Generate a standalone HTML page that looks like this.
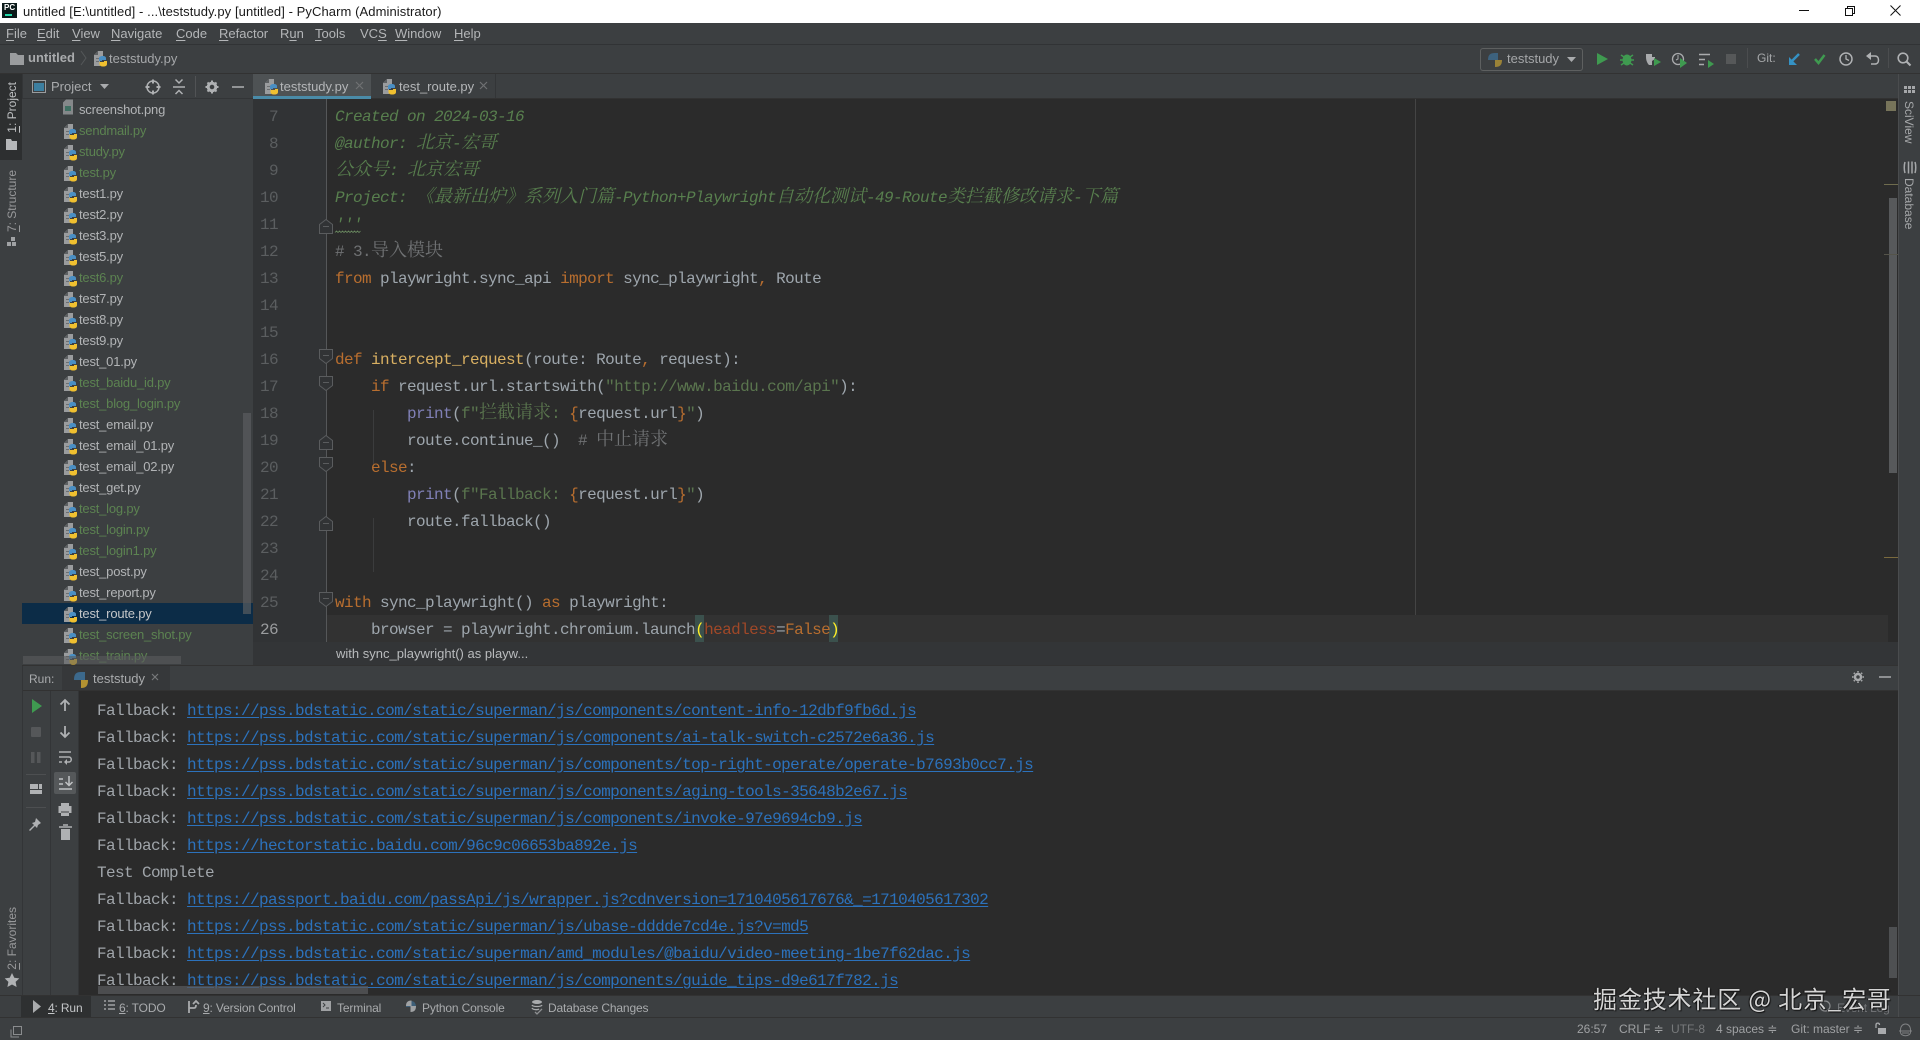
<!DOCTYPE html>
<html lang="zh"><head><meta charset="utf-8"><title>PyCharm</title>
<style>
html,body{margin:0;padding:0;width:1920px;height:1040px;overflow:hidden;background:#3c3f41}
.a{position:absolute}
.ui{position:absolute;font:13px/20px "Liberation Sans","Noto Sans CJK SC",sans-serif;color:#b4b6b8;white-space:pre}
.ui u{text-decoration-thickness:1px;text-underline-offset:2px}
.m{top:24px}
.r{position:absolute;left:0;width:231px;height:21px;font:13px/21px "Liberation Sans",sans-serif;color:#b2b4b6;text-indent:57px;white-space:pre;letter-spacing:-.2px}
.g{color:#5c8351}
.l,.n{position:absolute;font:16px/27px "Liberation Mono","Noto Serif CJK SC",monospace;letter-spacing:-.6px;white-space:pre;color:#9ea6ad;margin-top:1px}
.l{left:335px}
.n{left:250px;width:28px;text-align:right;color:#5b5e60;letter-spacing:-.6px}
.l b{font:18px/0 "Noto Serif CJK SC","Liberation Serif",serif;letter-spacing:0}
.k{color:#b86e2f}.d{color:#587f4e;font-style:italic}.d b{font-style:italic}.s{color:#5a754e}.c{color:#6f7173}.f{color:#d9b062}.p{color:#8080b6}.h{color:#a04828}
.o{position:absolute;left:97px;font:16px/27px "Liberation Mono",monospace;letter-spacing:-.6px;white-space:pre;color:#a0a5aa;margin-top:1px}
.o a{color:#2c72bc;text-decoration:underline;text-underline-offset:2px}
.v{position:absolute;writing-mode:vertical-rl;font:12px/14px "Liberation Sans",sans-serif;color:#a5a7a9;white-space:pre}
.v.u{transform:rotate(180deg)}
.b{position:absolute;top:999px;font:12px/18px "Liberation Sans",sans-serif;color:#a9abad;white-space:pre;letter-spacing:-.15px}
.st{position:absolute;top:1020px;font:12px/18px "Liberation Sans",sans-serif;color:#9fa1a3;white-space:pre}
</style></head><body>
<svg width="0" height="0" style="position:absolute"><defs>
<symbol id="py" viewBox="0 0 14 16"><path fill="#9a9c9e" d="M1 4l4-4h5v6H7v9H1z"/><path fill="#5d6062" d="M5 0v4H1z"/><path fill="#6c6f71" d="M3 7h3v1H3zM3 10h3v1H3z"/><path fill="#4a8fc4" d="M6 10V7.500C6 6 7.500 5 9.800 5S13 6 13 7.200V9H9v1z"/><path fill="#f0c030" d="M14 10v3c0 1.600-1.200 2.500-3.800 2.500C8 15.500 6.500 14.600 6.500 13.200V11H11v-1z"/></symbol>
</defs></svg>

<!-- title bar -->
<div class="a" style="left:0;top:0;width:1920px;height:23px;background:#fff"></div>
<div class="a" style="left:2px;top:3px;width:15px;height:15px;background:#0c1a1a"></div>
<div class="a" style="left:4px;top:3px;font:bold 8px/10px 'Liberation Sans',sans-serif;color:#fff">PC</div>
<div class="a" style="left:5px;top:14px;width:7px;height:2px;background:#22d8a8"></div>
<div class="ui" style="left:23px;top:2px;font-size:13px;color:#1a1a1a;letter-spacing:.08px">untitled [E:\untitled] - ...\teststudy.py [untitled] - PyCharm (Administrator)</div>

<!-- menu -->
<div class="ui m" style="left:6px"><u>F</u>ile</div>
<div class="ui m" style="left:37px"><u>E</u>dit</div>
<div class="ui m" style="left:72px"><u>V</u>iew</div>
<div class="ui m" style="left:111px"><u>N</u>avigate</div>
<div class="ui m" style="left:176px"><u>C</u>ode</div>
<div class="ui m" style="left:219px"><u>R</u>efactor</div>
<div class="ui m" style="left:280px">R<u>u</u>n</div>
<div class="ui m" style="left:315px"><u>T</u>ools</div>
<div class="ui m" style="left:360px">VC<u>S</u></div>
<div class="ui m" style="left:395px"><u>W</u>indow</div>
<div class="ui m" style="left:454px"><u>H</u>elp</div>
<div class="a" style="left:0;top:44px;width:1920px;height:1px;background:#313335"></div>

<!-- nav -->
<div class="ui" style="left:28px;top:48px;font-weight:bold;color:#a9abad">untitled</div>
<div class="ui" style="left:109px;top:49px;color:#a5a7a9">teststudy.py</div>
<div class="a" style="left:0;top:73px;width:1920px;height:1px;background:#323232"></div>
<div class="a" style="left:1480px;top:48px;width:101px;height:21px;border:1px solid #5e6060;border-radius:3px"></div>
<div class="ui" style="left:1507px;top:49px;color:#a5a7a9">teststudy</div>
<div class="ui" style="left:1757px;top:48px;font-size:12px;color:#a5a7a9">Git:</div>

<!-- left strip -->
<div class="a" style="left:0;top:74px;width:22px;height:86px;background:#2d2f30"></div>
<div class="a" style="left:22px;top:74px;width:1px;height:921px;background:#333537"></div>
<div class="v u" style="left:5px;top:82px;color:#bdbfc1"><u>1</u>: Project</div>
<div class="v u" style="left:5px;top:170px;color:#98999b"><u>7</u>: Structure</div>
<div class="v u" style="left:5px;top:907px;color:#98999b"><u>2</u>: Favorites</div>

<!-- project panel -->
<div class="a" style="left:23px;top:98px;width:230px;height:1px;background:#333537"></div>
<div class="ui" style="left:51px;top:77px;color:#a9abad">Project</div>
<div class="a" style="left:22px;top:99px;width:231px;height:566px;overflow:hidden;background:#3c3f41">
<div class="a" style="left:0;top:504px;width:231px;height:21px;background:#0c2c47"></div>
<div class="r" style="top:0">screenshot.png</div>
<div class="r g" style="top:21px">sendmail.py</div>
<div class="r g" style="top:42px">study.py</div>
<div class="r g" style="top:63px">test.py</div>
<div class="r" style="top:84px">test1.py</div>
<div class="r" style="top:105px">test2.py</div>
<div class="r" style="top:126px">test3.py</div>
<div class="r" style="top:147px">test5.py</div>
<div class="r g" style="top:168px">test6.py</div>
<div class="r" style="top:189px">test7.py</div>
<div class="r" style="top:210px">test8.py</div>
<div class="r" style="top:231px">test9.py</div>
<div class="r" style="top:252px">test_01.py</div>
<div class="r g" style="top:273px">test_baidu_id.py</div>
<div class="r g" style="top:294px">test_blog_login.py</div>
<div class="r" style="top:315px">test_email.py</div>
<div class="r" style="top:336px">test_email_01.py</div>
<div class="r" style="top:357px">test_email_02.py</div>
<div class="r" style="top:378px">test_get.py</div>
<div class="r g" style="top:399px">test_log.py</div>
<div class="r g" style="top:420px">test_login.py</div>
<div class="r g" style="top:441px">test_login1.py</div>
<div class="r" style="top:462px">test_post.py</div>
<div class="r" style="top:483px">test_report.py</div>
<div class="r" style="top:504px;color:#c4c6c8">test_route.py</div>
<div class="r g" style="top:525px">test_screen_shot.py</div>
<div class="r g" style="top:546px">test_train.py</div>
</div>

<!-- tabs -->
<div class="a" style="left:253px;top:74px;width:118px;height:22px;background:#4e5254"></div>
<div class="a" style="left:253px;top:98px;width:1667px;height:1px;background:#323232"></div>
<div class="a" style="left:253px;top:96px;width:118px;height:3px;background:#4a8ba8"></div>
<div class="a" style="left:495px;top:74px;width:1px;height:24px;background:#333537"></div>
<div class="ui" style="left:280px;top:77px;color:#b4b6b8">teststudy.py</div>
<div class="ui" style="left:399px;top:77px;color:#b4b6b8">test_route.py</div>

<!-- editor -->
<div class="a" style="left:253px;top:99px;width:1645px;height:543px;background:#2b2b2b"></div>
<div class="a" style="left:253px;top:99px;width:73px;height:543px;background:#313335"></div>
<div class="a" style="left:326px;top:99px;width:1px;height:543px;background:#555759"></div>
<div class="a" style="left:1415px;top:99px;width:1px;height:543px;background:#444"></div>
<div class="a" style="left:327px;top:615px;width:1561px;height:27px;background:#323232"></div>
<div class="a" style="left:373px;top:410px;width:1px;height:54px;background:#3b3c3d"></div>
<div class="a" style="left:373px;top:518px;width:1px;height:54px;background:#3b3c3d"></div>
<div class="a" style="left:695px;top:615px;width:9px;height:27px;background:#3b514d"></div>
<div class="a" style="left:829px;top:615px;width:9px;height:27px;background:#3b514d"></div>

<div class="n" style="top:103px">7</div><div class="l d" style="top:103px">Created on 2024-03-16</div>
<div class="n" style="top:130px">8</div><div class="l d" style="top:130px">@author: <b>北京</b>-<b>宏哥</b></div>
<div class="n" style="top:157px">9</div><div class="l d" style="top:157px"><b>公众号</b>: <b>北京宏哥</b></div>
<div class="n" style="top:184px">10</div><div class="l d" style="top:184px">Project: <b>《最新出炉》系列入门篇</b>-Python+Playwright<b>自动化测试</b>-49-Route<b>类拦截修改请求</b>-<b>下篇</b></div>
<div class="n" style="top:211px">11</div><div class="l d" style="top:211px">'''</div>
<div class="n" style="top:238px">12</div><div class="l c" style="top:238px"># 3.<b>导入模块</b></div>
<div class="n" style="top:265px">13</div><div class="l" style="top:265px"><span class="k">from</span> playwright.sync_api <span class="k">import</span> sync_playwright<span class="k">,</span> Route</div>
<div class="n" style="top:292px">14</div>
<div class="n" style="top:319px">15</div>
<div class="n" style="top:346px">16</div><div class="l" style="top:346px"><span class="k">def</span> <span class="f">intercept_request</span>(route: Route<span class="k">,</span> request):</div>
<div class="n" style="top:373px">17</div><div class="l" style="top:373px">    <span class="k">if</span> request.url.startswith(<span class="s">"http://www.baidu.com/api"</span>):</div>
<div class="n" style="top:400px">18</div><div class="l" style="top:400px">        <span class="p">print</span>(<span class="s">f"<b>拦截请求</b>: </span><span class="k">{</span>request.url<span class="k">}</span><span class="s">"</span>)</div>
<div class="n" style="top:427px">19</div><div class="l" style="top:427px">        route.continue_()  <span class="c"># <b>中止请求</b></span></div>
<div class="n" style="top:454px">20</div><div class="l" style="top:454px">    <span class="k">else</span>:</div>
<div class="n" style="top:481px">21</div><div class="l" style="top:481px">        <span class="p">print</span>(<span class="s">f"Fallback: </span><span class="k">{</span>request.url<span class="k">}</span><span class="s">"</span>)</div>
<div class="n" style="top:508px">22</div><div class="l" style="top:508px">        route.fallback()</div>
<div class="n" style="top:535px">23</div>
<div class="n" style="top:562px">24</div>
<div class="n" style="top:589px">25</div><div class="l" style="top:589px"><span class="k">with</span> sync_playwright() <span class="k">as</span> playwright:</div>
<div class="n" style="top:616px;color:#9a9c9e">26</div><div class="l" style="top:616px">    browser = playwright.chromium.launch<span style="color:#ffef28">(</span><span class="h">headless</span>=<span class="k">False</span><span style="color:#ffef28">)</span></div>

<!-- breadcrumb -->
<div class="a" style="left:253px;top:642px;width:1645px;height:23px;background:#333537"></div>
<div class="ui" style="left:336px;top:644px;font-size:13px;color:#b9bbbd">with sync_playwright() as playw...</div>
<div class="a" style="left:22px;top:665px;width:1898px;height:1px;background:#323232"></div>

<!-- run panel header -->
<div class="a" style="left:23px;top:666px;width:1875px;height:24px;background:#3c3f41"></div>
<div class="a" style="left:62px;top:666px;width:108px;height:24px;background:#36383a"></div>
<div class="ui" style="left:29px;top:669px;color:#a9abad;font-size:12px">Run:</div>
<div class="ui" style="left:93px;top:669px;color:#a9abad">teststudy</div>
<div class="a" style="left:23px;top:690px;width:1875px;height:1px;background:#323232"></div>

<!-- console -->
<div class="a" style="left:79px;top:691px;width:1819px;height:304px;background:#2b2b2b"></div>
<div class="a" style="left:50px;top:691px;width:1px;height:304px;background:#333537"></div>
<div class="a" style="left:78px;top:691px;width:1px;height:304px;background:#333537"></div>
<div class="o" style="top:697px">Fallback: <a>https://pss.bdstatic.com/static/superman/js/components/content-info-12dbf9fb6d.js</a></div>
<div class="o" style="top:724px">Fallback: <a>https://pss.bdstatic.com/static/superman/js/components/ai-talk-switch-c2572e6a36.js</a></div>
<div class="o" style="top:751px">Fallback: <a>https://pss.bdstatic.com/static/superman/js/components/top-right-operate/operate-b7693b0cc7.js</a></div>
<div class="o" style="top:778px">Fallback: <a>https://pss.bdstatic.com/static/superman/js/components/aging-tools-35648b2e67.js</a></div>
<div class="o" style="top:805px">Fallback: <a>https://pss.bdstatic.com/static/superman/js/components/invoke-97e9694cb9.js</a></div>
<div class="o" style="top:832px">Fallback: <a>https://hectorstatic.baidu.com/96c9c06653ba892e.js</a></div>
<div class="o" style="top:859px">Test Complete</div>
<div class="o" style="top:886px">Fallback: <a>https://passport.baidu.com/passApi/js/wrapper.js?cdnversion=1710405617676&amp;_=1710405617302</a></div>
<div class="o" style="top:913px">Fallback: <a>https://pss.bdstatic.com/static/superman/js/ubase-dddde7cd4e.js?v=md5</a></div>
<div class="o" style="top:940px">Fallback: <a>https://pss.bdstatic.com/static/superman/amd_modules/@baidu/video-meeting-1be7f62dac.js</a></div>
<div class="o" style="top:967px;height:27px;overflow:hidden">Fallback: <a>https://pss.bdstatic.com/static/superman/js/components/guide_tips-d9e617f782.js</a></div>
<div class="a" style="left:98px;top:986px;width:270px;height:8px;background:rgba(88,90,92,.75)"></div>
<div class="a" style="left:1889px;top:927px;width:8px;height:51px;background:#4e5052"></div>

<!-- editor scroll -->
<div class="a" style="left:1889px;top:198px;width:8px;height:275px;background:#57595b"></div>
<div class="a" style="left:1886px;top:101px;width:10px;height:10px;background:#77745a"></div>
<div class="a" style="left:1884px;top:184px;width:14px;height:1px;background:#6f6c4e"></div>
<div class="a" style="left:1884px;top:254px;width:14px;height:1px;background:#55544a"></div>
<div class="a" style="left:1884px;top:557px;width:14px;height:1px;background:#7a6a3e"></div>

<!-- right strip -->
<div class="a" style="left:1898px;top:74px;width:22px;height:943px;background:#3c3f41;border-left:1px solid #4a4c4e;box-sizing:border-box"></div>
<div class="v" style="left:1902px;top:101px">SciView</div>
<div class="v" style="left:1902px;top:178px">Database</div>

<!-- bottom bar -->
<div class="a" style="left:0;top:995px;width:1920px;height:1px;background:#323232"></div>
<div class="a" style="left:21px;top:996px;width:70px;height:21px;background:#2e3031"></div>
<div class="a" style="left:0;top:1017px;width:1920px;height:1px;background:#323232"></div>
<div class="b" style="left:48px;color:#c4c6c8"><u>4</u>: Run</div>
<div class="b" style="left:119px"><u>6</u>: TODO</div>
<div class="b" style="left:203px"><u>9</u>: Version Control</div>
<div class="b" style="left:337px">Terminal</div>
<div class="b" style="left:422px">Python Console</div>
<div class="b" style="left:548px">Database Changes</div>
<div class="b" style="left:1837px;top:999px;color:#75777a">Event Log</div>

<!-- status -->
<div class="st" style="left:1577px">26:57</div>
<div class="st" style="left:1619px">CRLF ≑</div>
<div class="st" style="left:1671px;color:#77797b">UTF-8</div>
<div class="st" style="left:1716px">4 spaces ≑</div>
<div class="st" style="left:1791px">Git: master ≑</div>

<!-- icons -->
<svg class="a" style="left:0;top:0;pointer-events:none" width="1920" height="1040" viewBox="0 0 1920 1040" fill="none">
<!-- window buttons -->
<path stroke="#111" d="M1799 10.500h10"/><path stroke="#111" d="M1845.500 8.500h7v7h-7zM1847.500 8.500v-2h7v7h-2"/><path stroke="#111" d="M1890.500 5.500l10 10M1900.500 5.500l-10 10"/>
<!-- nav folder -->
<path fill="#9a9c9e" d="M10 53h6l2 2h6v10H10z"/>
<path stroke="#55585a" d="M81 51l5 7-5 7"/>
<use href="#py" x="93" y="51" width="14" height="16"/>
<!-- left strip icons -->
<path fill="#b5b7b9" d="M6 139h5l1 2h5v9H6z"/>
<path fill="#a0a2a4" d="M11 237h4v4h-4zM7 242h4v4H7zM12 242h4v4h-4z"/>
<path fill="#b0b2b4" d="M12 973l2.300 4.800 5 .6-3.700 3.500 1 5.100-4.600-2.500-4.600 2.500 1-5.100-3.700-3.500 5-.6z"/>
<!-- project header -->
<rect x="32.500" y="80.500" width="13" height="12" stroke="#9a9c9e"/><rect x="34" y="83" width="10" height="8" fill="#3d7fa0"/>
<path fill="#a9abad" d="M100 84h9l-4.500 5z"/>
<circle cx="153" cy="87" r="6" stroke="#afb1b3" stroke-width="1.500"/><path stroke="#afb1b3" stroke-width="2" d="M153 79.500v4M153 90.500v4M145.500 87h4M156.500 87h4"/>
<path stroke="#afb1b3" stroke-width="1.500" d="M173 87h12M175.500 79.500l3.500 3.500 3.500-3.500M175.500 94l3.500-3.500 3.500 3.500"/>
<path stroke="#515355" d="M195.500 76v21"/>
<circle cx="212" cy="87" r="3.800" stroke="#afb1b3" stroke-width="3"/><path stroke="#afb1b3" stroke-width="2" d="M212 80.500v2M212 91.500v2M205.500 87h2M216.500 87h2M207.500 82.500l1.400 1.400M215.100 90.100l1.400 1.400M216.500 82.500l-1.400 1.400M208.900 90.100l-1.400 1.400"/>
<path stroke="#afb1b3" stroke-width="1.500" d="M232 87h12"/>
<!-- screenshot.png file icon -->
<path fill="#85888a" d="M63 102.500l3-3h7v15H63z"/><rect x="65" y="106" width="6" height="5" fill="#3f6f62"/>
<!-- file icons -->
<use href="#py" x="63" y="124" width="14" height="16"/><use href="#py" x="63" y="145" width="14" height="16"/><use href="#py" x="63" y="166" width="14" height="16"/><use href="#py" x="63" y="187" width="14" height="16"/><use href="#py" x="63" y="208" width="14" height="16"/><use href="#py" x="63" y="229" width="14" height="16"/><use href="#py" x="63" y="250" width="14" height="16"/><use href="#py" x="63" y="271" width="14" height="16"/><use href="#py" x="63" y="292" width="14" height="16"/><use href="#py" x="63" y="313" width="14" height="16"/><use href="#py" x="63" y="334" width="14" height="16"/><use href="#py" x="63" y="355" width="14" height="16"/><use href="#py" x="63" y="376" width="14" height="16"/><use href="#py" x="63" y="397" width="14" height="16"/><use href="#py" x="63" y="418" width="14" height="16"/><use href="#py" x="63" y="439" width="14" height="16"/><use href="#py" x="63" y="460" width="14" height="16"/><use href="#py" x="63" y="481" width="14" height="16"/><use href="#py" x="63" y="502" width="14" height="16"/><use href="#py" x="63" y="523" width="14" height="16"/><use href="#py" x="63" y="544" width="14" height="16"/><use href="#py" x="63" y="565" width="14" height="16"/><use href="#py" x="63" y="586" width="14" height="16"/><use href="#py" x="63" y="607" width="14" height="16"/><use href="#py" x="63" y="628" width="14" height="16"/>
<svg x="63" y="649" width="14" height="16" viewBox="0 0 14 16"><use href="#py" width="14" height="16"/></svg>
<!-- project scrollbars -->
<rect x="243" y="413" width="8" height="201" fill="#5a5d5f" fill-opacity=".7"/>
<rect x="23" y="656" width="158" height="8" fill="#5a5c5e" fill-opacity=".6"/>
<!-- tab icons -->
<use href="#py" x="264" y="79" width="14" height="16"/><use href="#py" x="382" y="79" width="14" height="16"/>
<path stroke="#6f7173" stroke-width="1.200" d="M356 82l7 7M363 82l-7 7M480 82l7 7M487 82l-7 7"/>
<!-- toolbar -->
<g opacity=".55"><path fill="#3f7fb0" d="M1488 60c0-5 2-7 7-7v7z"/><path fill="#e8b92f" d="M1502 60c0 5-2 7-7 7v-7z"/><path fill="#3f7fb0" d="M1495 53h3v7h-3z"/></g>
<path fill="#a9abad" d="M1567 57h9l-4.500 5z"/>
<path fill="#3f9a50" d="M1597 53l11 6-11 6z"/>
<ellipse cx="1627" cy="60" rx="4.500" ry="5.500" fill="#3f9a50"/><path stroke="#3f9a50" stroke-width="1.500" d="M1621 55l3 2M1633 55l-3 2M1620 60h3M1631 60h3M1621 65l3-2M1633 65l-3-2"/>
<path fill="#a9abad" d="M1646 54h6v3h3v2l-3 2v4l-3 0c-2-2-3-5-3-8z"/><path fill="#3f9a50" d="M1654 58l7 4-7 4z"/>
<circle cx="1678" cy="59" r="5.500" stroke="#a9abad" stroke-width="1.300"/><path stroke="#a9abad" d="M1678 55v4l-2 1"/><path fill="#3f9a50" d="M1680 58l7 5-7 5z"/>
<path stroke="#a9abad" stroke-width="1.500" d="M1699 54.500h11M1699 59.500h6M1699 64.500h5"/><path fill="#3f9a50" d="M1708 60l6 4-6 4z"/>
<rect x="1726" y="54" width="10" height="10" fill="#565859"/>
<path stroke="#4b4d4f" d="M1747.500 48v20"/>
<path stroke="#3592c4" stroke-width="2.500" d="M1799 54l-9 9"/><path fill="#3592c4" d="M1789 57v8h8z"/>
<path stroke="#3f9a50" stroke-width="2.500" d="M1815 59l3.500 4 6-8"/>
<circle cx="1846" cy="59" r="6" stroke="#afb1b3" stroke-width="1.500"/><path stroke="#afb1b3" stroke-width="1.300" d="M1846 55v4l3 1.500"/>
<path stroke="#afb1b3" stroke-width="1.500" d="M1868 56h7c2.500 0 3.500 2 3.500 4 0 2-1 4-3.500 4h-4"/><path fill="#afb1b3" d="M1871 52v8l-5-4z"/>
<path stroke="#4b4d4f" d="M1888.500 48v20"/>
<circle cx="1903" cy="58" r="4.800" stroke="#afb1b3" stroke-width="1.600"/><path stroke="#afb1b3" stroke-width="2" d="M1906.500 61.500l4 4"/>
<!-- right strip icons -->
<path fill="#a5a7a9" d="M1904 86h3v3h-3zM1908 86h3v3h-3zM1912 86h3v3h-3zM1904 90h3v3h-3zM1908 90h3v3h-3zM1912 90h3v3h-3z"/>
<path stroke="#a5a7a9" stroke-width="1.500" d="M1905 162c-1 3-1 8 0 11M1908.500 161.500v12M1912 161.500v12M1915 162c1 3 1 8 0 11"/>
<!-- fold markers -->
<g stroke="#5a5c5e" fill="#313335">
<path d="M319.500 349.500h13v9l-6.500 5-6.500-5zM319.500 376.500h13v9l-6.500 5-6.500-5zM319.500 457.500h13v9l-6.500 5-6.500-5zM319.500 592.500h13v9l-6.500 5-6.500-5z"/>
<path d="M319.500 233.500h13v-9l-6.500-5-6.500 5zM319.500 449.500h13v-9l-6.500-5-6.500 5zM319.500 530.500h13v-9l-6.500-5-6.500 5z"/>
<path d="M323 355.500h6M323 382.500h6M323 463.500h6M323 598.500h6M323 226.500h6M323 442.500h6M323 523.500h6"/>
</g>
<path stroke="#6a8a60" stroke-width=".8" d="M335 232.500l1.500-1.500 1.500 1.500 1.500-1.500 1.500 1.500 1.500-1.500 1.500 1.500 1.500-1.500 1.500 1.500 1.500-1.500 1.500 1.500 1.500-1.500 1.500 1.500 1.500-1.500 1.500 1.500 1.500-1.500 1.500 1.500 1.500-1.500"/>
<!-- run header icons -->
<g opacity=".7"><path fill="#3f7fb0" d="M74 680c0-6 2-8 7-8v8z"/><path fill="#e8b92f" d="M88 680c0 6-2 8-7 8v-8z"/><path fill="#3f7fb0" d="M81 672h4v8h-4z"/></g>
<path stroke="#77797b" stroke-width="1.200" d="M152 674l6 6M158 674l-6 6"/>
<circle cx="1858" cy="677" r="3" stroke="#a9abad" stroke-width="2.500"/><path stroke="#a9abad" stroke-width="1.500" d="M1858 671v1.500M1858 681.500v1.500M1852 677h1.500M1862.500 677H1864M1853.800 672.800l1 1M1861.200 680.200l1 1M1862.200 672.800l-1 1M1854.800 680.200l-1 1"/>
<path stroke="#a9abad" stroke-width="1.500" d="M1879 677h12"/>
<!-- run side -->
<path fill="#3f9a50" d="M32 699l10 7-10 7z"/>
<rect x="31" y="727" width="10" height="10" rx="1" fill="#555759"/>
<path fill="#555759" d="M31 752h3.500v11H31zM37 752h3.500v11H37z"/>
<path stroke="#4d4f51" d="M26 774.500h20M26 807.500h20"/>
<path fill="#b0b2b4" d="M30 786h8v5h-8zM39 786h3v5h-3zM30 792h12v4H30z" transform="translate(0 -2)"/>
<path fill="#afb1b3" d="M36 818l5 5-3 2-1 3-2-2-5 5-1-1 5-5-2-2 3-1z"/>
<path stroke="#afb1b3" stroke-width="1.800" d="M65 711v-11M60.500 704.500L65 700l4.500 4.500M65 726v11M60.500 732.500L65 737l4.500-4.500"/>
<path stroke="#afb1b3" stroke-width="1.500" d="M59 752h12M59 757h10c3 0 3 5 0 5h-3M59 762h3"/><path fill="#afb1b3" d="M67 759v6l-3-3z"/>
<rect x="54" y="772" width="22" height="22" rx="2" fill="#55585a"/>
<path stroke="#c0c2c4" stroke-width="1.500" d="M59 779h4M59 784h4M59 789h13M69 776v9M65.500 782l3.500 3.500 3.500-3.500"/>
<path fill="#afb1b3" d="M61 803h8v3h2.500v7H69v3h-8v-3h-2.500v-7H61z"/><path stroke="#3c3f41" d="M61 812h8"/>
<path fill="#afb1b3" d="M61 829h9v11h-9z"/><path stroke="#afb1b3" stroke-width="1.500" d="M59 827h13M63 825h5"/>
<!-- bottom icons -->
<path fill="#a9abad" d="M33 1000l8 6.500-8 6.500z"/>
<path stroke="#a0a2a4" stroke-width="1.500" d="M104 1001h2M108 1001h7M104 1005h2M108 1005h7M104 1009h2M108 1009h7"/>
<path stroke="#a9abad" stroke-width="1.800" d="M189 1001v12M189 1008h5c1.500 0 2-1 2-3M193 1004l3-3 3 3"/>
<rect x="321" y="1001" width="10" height="10" fill="#9fa1a3"/><path stroke="#3c3f41" d="M323 1003l2 2-2 2M326 1008h3"/>
<path fill="#3f7fb0" fill-opacity=".5" d="M406 1007c0-4 2-6 5-6s5 2 5 6z"/><path fill="#a0a2a4" d="M406 1006c0-3.500 1.500-5.500 5.500-5.500v5.500zM416 1006c0 4-1.500 6-5.500 6v-6z"/>
<ellipse cx="537" cy="1002" rx="5" ry="2" fill="#a9abad"/><path stroke="#a9abad" stroke-width="1.300" d="M532 1005c1 2 9 2 10 0M532 1008c1 2 6 2 7 1"/><path stroke="#8d8f91" stroke-width="1.300" d="M535 1012l2 2 5-5"/>
<!-- event log -->
<circle cx="1825" cy="1006" r="5" stroke="#8a8c8e" stroke-width="1.200"/><path stroke="#8a8c8e" stroke-width="1.200" d="M1825 1011h9"/>
<!-- status icons -->
<rect x="13.500" y="1026.500" width="8" height="8" stroke="#8a8c8e"/><path stroke="#8a8c8e" d="M11 1029.500v7.500h8"/>
<path fill="#a9abad" d="M1878 1028h8v6h-8z"/><path stroke="#a9abad" stroke-width="1.300" d="M1876 1028v-3c0-2.500 3.500-2.500 3.500 0"/>
<path stroke="#808284" d="M1900.500 1030c0-8 10-8 10 0v2c0 5-10 5-10 0zM1899 1031h13M1902 1033h7"/>
</svg>

<!-- watermark -->
<div class="a" style="left:1593px;top:980px;font:24px/36px 'Noto Sans CJK SC','Liberation Sans',sans-serif;color:#d5d5d5;white-space:pre;letter-spacing:.85px;text-shadow:1px 1px 1px #111,-1px 0 1px #111">掘金技术社区 @ 北京_宏哥</div>
</body></html>
